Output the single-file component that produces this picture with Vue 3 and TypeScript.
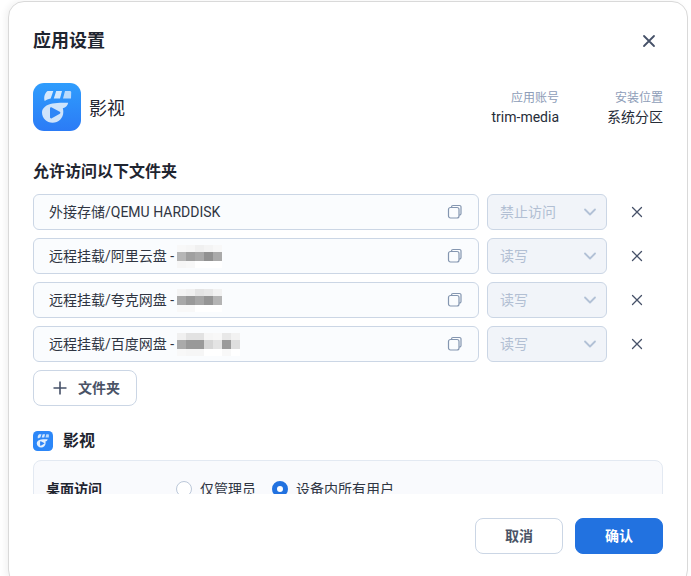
<script setup lang="ts">
interface Row { path: string; mosaic: string[][]; perm: string; }
const c = (s: string) => s.split(' ').map((v) => '#' + v);
const rows: Row[] = [
  { path: '外接存储/QEMU HARDDISK', mosaic: [], perm: '禁止访问' },
  {
    path: '远程挂载/阿里云盘 -',
    mosaic: [c('f8f8f8 f6f6f6 f0f0f0 f4f4f4 f8f8f8'), c('b6b6b6 a0a0a0 a9a9a9 919191 aaaaaa'), c('f6f6f6 f8f8f8 ffffff ffffff ffffff')],
    perm: '读写',
  },
  {
    path: '远程挂载/夸克网盘 -',
    mosaic: [c('f4f4f4 f0f0f0 e4e4e4 e8e8e8 f2f2f2'), c('a8a8a8 999999 a6a6a6 959595 b4b4b4'), c('f8f8f8 f8f8f8 ffffff ffffff ffffff')],
    perm: '读写',
  },
  {
    path: '远程挂载/百度网盘 -',
    mosaic: [c('f0f0f0 e2e2e2 e2e2e2 f6f6f6 f8f8f8 e8e8e8 f2f2f2'), c('aaaaaa 999999 999999 d6d6d6 e4e4e4 9a9a9a dedede'), c('f8f8f8 f6f6f6 f6f6f6 ffffff ffffff f8f8f8 ffffff')],
    perm: '读写',
  },
];
</script>

<template>
  <div class="page">
    <section class="dialog">
      <header class="head">
        <h1>应用设置</h1>
        <svg class="close" width="14" height="14" viewBox="0 0 14 14"><path d="M2 2l10 10M12 2L2 12" /></svg>
      </header>

      <div class="body">
        <div class="app">
          <svg class="app-icon" viewBox="0 0 48 48">
            <defs>
              <linearGradient id="icon-bg" x1="0" y1="0" x2="0" y2="1">
                <stop offset="0" stop-color="#2f9dfd" />
                <stop offset="1" stop-color="#2b7bf6" />
              </linearGradient>
            </defs>
            <rect width="48" height="48" rx="11" fill="url(#icon-bg)" />
            <path d="M14.500 8h5.800l-2.600 7.500c-2.500.4-4.500 1.300-6 2.600 -1-3.600-.4-7.400 2.800-10.100z" fill="#d4e8fd" />
            <path d="M23.200 8h5.800l-2 7.500h-6.200z" fill="#d4e8fd" />
            <path d="M32 8h4.800c1 0 1.400.7 1.400 1.500l-.2 6h-8z" fill="#b9dafc" />
            <path d="M19.500 20.500c4-1 9.500-.8 15.700-.8 -.3 2.600-2.400 4.800-5.400 5.600 .4 1.200.5 2.400.5 3.700 0 6-4.800 10.800-10.700 10.800S9 35 9 29.500c0-4.500 4.500-8 10.500-9z" fill="#cfe4fb" />
            <path d="M17 25.500c0-.9 1-1.500 1.800-1l8 4.300c.8.500.8 1.500 0 2l-8 4.400c-.8.500-1.800-.1-1.800-1z" fill="#2f86f7" />
          </svg>
          <span class="app-name">影视</span>
          <div class="meta">
            <div class="meta-col">
              <span class="meta-label">应用账号</span>
              <span class="meta-value">trim-media</span>
            </div>
            <div class="meta-col">
              <span class="meta-label">安装位置</span>
              <span class="meta-value">系统分区</span>
            </div>
          </div>
        </div>

        <h2 class="sub">允许访问以下文件夹</h2>

        <div class="rows">
          <div v-for="row in rows" :key="row.path" class="row">
            <div class="path">
              <span class="path-text">{{ row.path }}</span>
              <span v-if="row.mosaic.length" class="mosaic">
                <span v-for="(line, i) in row.mosaic" :key="i" class="mosaic-line">
                  <i v-for="(color, j) in line" :key="j" :style="{ background: color }"></i>
                </span>
              </span>
              <svg class="copy" width="16" height="16" viewBox="0 0 16 16">
                <rect x="1.500" y="3.500" width="10.500" height="10.500" rx="2" />
                <path d="M4.500 3.500V3a1.500 1.500 0 0 1 1.500-1.500h6.500A1.500 1.500 0 0 1 14 3v6.500a1.500 1.500 0 0 1-1.500 1.500H12" />
              </svg>
            </div>
            <div class="select">
              <span class="lift">{{ row.perm }}</span>
              <svg width="14" height="14" viewBox="0 0 14 14"><path d="M2 4.500l5 5 5-5" /></svg>
            </div>
            <svg class="remove" width="12" height="12" viewBox="0 0 12 12"><path d="M1.500 1.500l9 9M10.500 1.500l-9 9" /></svg>
          </div>
        </div>

        <button class="add" type="button">
          <svg width="14" height="14" viewBox="0 0 14 14"><path d="M7 .5v13M.5 7h13" /></svg>
          <span class="lift">文件夹</span>
        </button>

        <div class="section-title">
          <svg class="mini" viewBox="0 0 48 48">
            <rect width="48" height="48" rx="11" fill="#2c87f8" />
            <path d="M14.500 8h5.800l-2.600 7.500c-2.500.4-4.500 1.300-6 2.600 -1-3.600-.4-7.400 2.800-10.100z" fill="#d4e8fd" />
            <path d="M23.200 8h5.800l-2 7.500h-6.200z" fill="#d4e8fd" />
            <path d="M32 8h4.800c1 0 1.400.7 1.400 1.500l-.2 6h-8z" fill="#b9dafc" />
            <path d="M19.500 20.500c4-1 9.500-.8 15.700-.8 -.3 2.600-2.400 4.800-5.400 5.600 .4 1.200.5 2.400.5 3.700 0 6-4.800 10.800-10.700 10.800S9 35 9 29.500c0-4.500 4.500-8 10.500-9z" fill="#e4f0fd" />
            <path d="M17 25.500c0-.9 1-1.500 1.800-1l8 4.300c.8.500.8 1.500 0 2l-8 4.400c-.8.500-1.800-.1-1.800-1z" fill="#2f86f7" />
          </svg>
          <span>影视</span>
        </div>

        <div class="card">
          <span class="card-label">桌面访问</span>
          <label class="radio"><i class="dot"></i>仅管理员</label>
          <label class="radio"><i class="dot on"></i>设备内所有用户</label>
        </div>
      </div>

      <footer class="foot">
        <button class="btn ghost" type="button">取消</button>
        <button class="btn primary" type="button">确认</button>
      </footer>
    </section>
  </div>
</template>

<style>
html, body { margin: 0; background: #fff; overflow: hidden; }
</style>

<style scoped>
* { box-sizing: border-box; }
.page {
  width: 691px;
  height: 576px;
  padding: 1px 3px 0 8px;
  overflow: hidden;
  background: #fff;
  font-family: Roboto, "Noto Sans CJK SC", sans-serif;
  color: #1f2530;
}
.dialog {
  width: 680px;
  height: 585px;
  background: #fff;
  border: 1px solid #d9d9d9;
  border-radius: 16px;
  box-shadow: -3px 0 6px rgba(0, 0, 0, .05);
  padding: 0 24px;
  display: flex;
  flex-direction: column;
}
.head {
  height: 78px;
  flex: none;
  display: flex;
  align-items: center;
  justify-content: space-between;
  padding-right: 7px;
}
h1 { margin: 0; font-size: 18px; line-height: 24px; font-weight: 700; }
.close path { fill: none; stroke: #465168; stroke-width: 1.800; stroke-linecap: round; }
.body {
  height: 414px;
  flex: none;
  overflow: hidden;
  padding-top: 3px;
}
.app { display: flex; align-items: center; height: 48px; }
.app-icon { width: 48px; height: 48px; flex: none; }
.app-name { margin-left: 8px; font-size: 18px; }
.meta { margin-left: auto; display: flex; gap: 48px; padding-top: 2px; }
.meta-col { display: flex; flex-direction: column; align-items: flex-end; }
.meta-label { font-size: 12px; line-height: 19px; color: #8e9db8; }
.meta-value { font-size: 14px; line-height: 19px; color: #262c38; }
.sub { margin: 30px 0 0; font-size: 16px; line-height: 22px; font-weight: 700; }
.rows { margin-top: 11px; display: flex; flex-direction: column; gap: 8px; }
.row { display: flex; align-items: center; height: 36px; }
.path {
  width: 446px;
  height: 36px;
  flex: none;
  display: flex;
  align-items: center;
  padding: 0 15px;
  background: #fafcfe;
  border: 1px solid #cbd6e5;
  border-radius: 6px;
  font-size: 14px;
  color: #2f3542;
}
.path-text { white-space: nowrap; margin-bottom: 2px; }
.lift { margin-bottom: 2px; }
.mosaic { display: flex; flex-direction: column; margin-left: 3px; }
.mosaic-line { display: flex; height: 7px; }
.mosaic-line:nth-child(2) { height: 9px; }
.mosaic-line i { width: 9px; display: block; }
.copy { margin-left: auto; flex: none; }
.copy rect, .copy path { fill: none; stroke: #8496b0; stroke-width: 1.200; }
.select {
  width: 120px;
  height: 36px;
  flex: none;
  margin-left: 8px;
  display: flex;
  align-items: center;
  justify-content: space-between;
  padding: 0 9px 0 12px;
  background: #f1f4f9;
  border: 1px solid #cbd6e5;
  border-radius: 6px;
  font-size: 14px;
  color: #b2bfd3;
}
.select path { fill: none; stroke: #b2c1d6; stroke-width: 1.800; stroke-linecap: round; stroke-linejoin: round; }
.remove { margin-left: 24px; flex: none; }
.remove path { fill: none; stroke: #465168; stroke-width: 1.300; stroke-linecap: round; }
.add {
  margin-top: 8px;
  width: 104px;
  height: 36px;
  display: flex;
  align-items: center;
  gap: 11px;
  padding: 0 0 0 19px;
  background: #fff;
  border: 1px solid #cbd6e5;
  border-radius: 8px;
  font: inherit;
  font-size: 14px;
  font-weight: 700;
  color: #4a5366;
}
.add path { fill: none; stroke: #465168; stroke-width: 1.600; }
.section-title {
  margin-top: 25px;
  display: flex;
  align-items: center;
  gap: 10px;
  font-size: 16px;
  line-height: 20px;
  font-weight: 700;
}
.mini { width: 20px; height: 20px; flex: none; }
.card {
  margin-top: 9px;
  height: 90px;
  padding: 18px 12px 0;
  display: flex;
  align-items: flex-start;
  background: #f9fafd;
  border: 1px solid #e3e9f2;
  border-radius: 8px;
  font-size: 14px;
  line-height: 20px;
  color: #2f3542;
}
.card-label { width: 130px; flex: none; font-weight: 700; color: #1f2530; }
.radio { display: flex; align-items: center; gap: 8px; margin-right: 16px; }
.dot {
  width: 16px;
  height: 16px;
  border-radius: 50%;
  border: 1px solid #bcc8d9;
  background: #fff;
  display: block;
}
.dot.on { border: 5px solid #2272e0; }
.foot {
  margin-top: 24px;
  flex: none;
  display: flex;
  justify-content: flex-end;
  gap: 12px;
}
.btn {
  width: 88px;
  height: 36px;
  border-radius: 8px;
  font: inherit;
  font-size: 14px;
  font-weight: 700;
  padding: 0 0 2px;
}
.ghost { background: #fff; border: 1px solid #cbd6e5; color: #4a5366; }
.primary { background: #2272e0; border: 1px solid #2272e0; color: #fff; }
</style>
